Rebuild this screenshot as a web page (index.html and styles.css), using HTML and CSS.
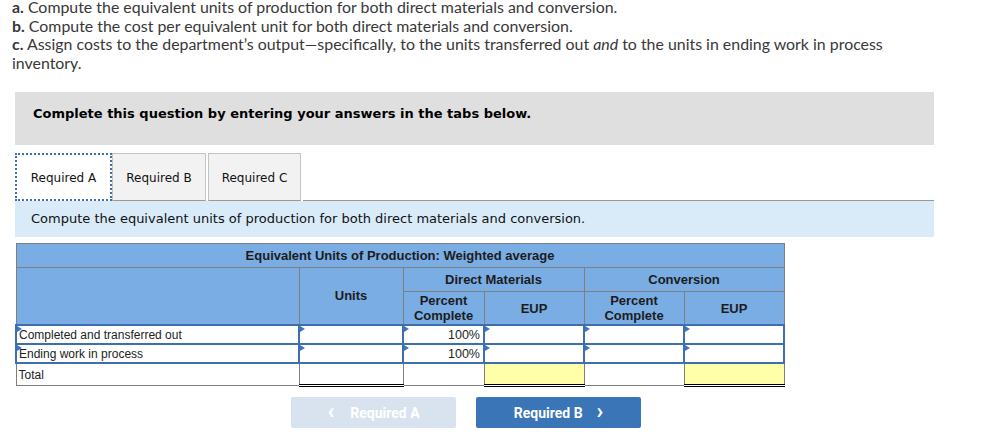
FILE: index.html
```html
<!DOCTYPE html>
<html>
<head>
<meta charset="utf-8">
<link rel="stylesheet" href="styles.css">
</head>
<body>
<div class="intro">
  <p><b>a.</b> Compute the equivalent units of production for both direct materials and conversion.</p>
  <p><b>b.</b> Compute the cost per equivalent unit for both direct materials and conversion.</p>
  <p><b>c.</b> Assign costs to the department’s output—specifically, to the units transferred out <i>and</i> to the units in ending work in process inventory.</p>
</div>
<div class="panel">
  <div class="notice">Complete this question by entering your answers in the tabs below.</div>
  <div class="tabs">
    <div class="tab active">Required A</div>
    <div class="tab">Required B</div>
    <div class="tab">Required C</div>
    <div class="tab-rest"></div>
  </div>
  <div class="instruct">Compute the equivalent units of production for both direct materials and conversion.</div>
  <table class="eup">
    <colgroup>
      <col class="c-label"><col class="c-units"><col class="c-pct"><col class="c-eup"><col class="c-pct2"><col class="c-eup2">
    </colgroup>
    <tr class="h1"><th colspan="6">Equivalent Units of Production: Weighted average</th></tr>
    <tr class="h2"><th rowspan="2"></th><th rowspan="2" class="units-h">Units</th><th colspan="2">Direct Materials</th><th colspan="2">Conversion</th></tr>
    <tr class="h3"><th>Percent<br>Complete</th><th>EUP</th><th>Percent<br>Complete</th><th>EUP</th></tr>
    <tr class="row">
      <td class="inp lab"><span class="tri"></span>Completed and transferred out</td>
      <td class="inp"><span class="tri"></span></td>
      <td class="inp num"><span class="tri"></span>100%</td>
      <td class="inp"><span class="tri"></span></td>
      <td class="inp"><span class="tri"></span></td>
      <td class="inp"><span class="tri"></span></td>
    </tr>
    <tr class="row">
      <td class="inp lab"><span class="tri"></span>Ending work in process</td>
      <td class="inp"><span class="tri"></span></td>
      <td class="inp num"><span class="tri"></span>100%</td>
      <td class="inp"><span class="tri"></span></td>
      <td class="inp"><span class="tri"></span></td>
      <td class="inp"><span class="tri"></span></td>
    </tr>
    <tr class="total">
      <td class="lab">Total</td>
      <td class="dbl"></td>
      <td></td>
      <td class="dbl yel"></td>
      <td></td>
      <td class="dbl yel"></td>
    </tr>
  </table>
  <div class="nav">
    <div class="btn prev"><span class="chev">&lsaquo;</span>Required A</div>
    <div class="btn next">Required B<span class="chev">&rsaquo;</span></div>
  </div>
</div>
</body>
</html>
```
FILE: styles.css
```css
html, body { margin: 0; padding: 0; background: #fff; }
body { width: 991px; height: 444px; overflow: hidden; }

.intro {
  margin-top: -2px;
  padding-left: 12px;
  width: 878px;
  font-family: Lato, "Liberation Sans", sans-serif;
  font-size: 15.9px;
  line-height: 18.5px;
  color: #383838;
}
.intro p { margin: 0; }
.intro b { font-weight: 700; }

.panel { margin: 20px 0 0 15px; width: 919px; }

.notice {
  background: #dfdfdf;
  height: 53px;
  box-sizing: border-box;
  padding: 13px 0 0 18px;
  font-family: "DejaVu Sans", Verdana, sans-serif;
  font-weight: bold;
  font-size: 13px;
  line-height: 18px;
  color: #000;
}

.tabs { display: flex; margin-top: 8px; height: 48px; align-items: stretch; }
.tab {
  box-sizing: border-box;
  border: 1px solid #c4c4c4;
  border-bottom: 1px solid #999;
  background: #f2f2f2;
  font-family: "DejaVu Sans", Verdana, sans-serif;
  font-size: 12px;
  color: #111;
  display: flex; align-items: center; justify-content: center;
  padding-top: 1px;
  margin-right: 2px;
}
.tab:nth-child(2) { width: 94px; margin-right: 2px; }
.tab:nth-child(3) { width: 93px; }
.tab.active {
  width: 97px;
  background: #fff;
  border: 2px dotted #3a6fb3;
  margin-right: 0;
}
.tab-rest { flex: 1; border-bottom: 1px solid #999; }

.instruct {
  background: #d9ebf9;
  height: 36px;
  box-sizing: border-box;
  padding: 10px 0 0 16px;
  font-family: "DejaVu Sans", Verdana, sans-serif;
  font-size: 13px;
  color: #111;
}

.eup {
  margin-top: 6px;
  border-collapse: collapse;
  table-layout: fixed;
  width: 769px;
  font-family: "Liberation Sans", Arial, sans-serif;
  color: #222;
  border: 1px solid #7f7f7f;
}
.c-label { width: 283px; }
.c-units { width: 104px; }
.c-pct { width: 81px; }
.c-eup { width: 100px; }
.c-pct2 { width: 100px; }
.c-eup2 { width: 100px; }

.eup th {
  background: #79ade4;
  border: 1px solid #7f7f7f;
  font-size: 13px;
  font-weight: bold;
  color: #1c1c1c;
  padding: 0;
  line-height: 15px;
}
.h1 th { height: 23px; font-size: 13px; }
.h2 th { height: 23px; }
.h2 th.units-h { vertical-align: top; padding-top: 20px; }
.h3 th { height: 32px; }

.eup td {
  position: relative;
  border: 1px solid #7f7f7f;
  padding: 0 3px;
  font-size: 12px;
  height: 17px;
  line-height: 14px;
  background: #fff;
}
.eup td.inp { border: 2px solid #3d6fae; }
.eup td.num { text-align: right; font-size: 12.5px; }
.eup td.lab { padding-left: 2px; }
.eup .total td { height: 20px; }
.eup td.dbl { border-bottom: 3px double #000; }
.eup td.yel { background: #ffffaa; }

.tri {
  position: absolute;
  left: 0; top: 0;
  width: 0; height: 0;
  border-top: 3px solid transparent;
  border-bottom: 3px solid transparent;
  border-left: 5px solid #3b74c2;
}

.nav { display: flex; margin: 10px 0 0 276px; gap: 20px; }
.btn {
  width: 165px; height: 31px;
  border-radius: 2px;
  display: flex; align-items: center; justify-content: center;
  font-family: Roboto, "Liberation Sans", sans-serif;
  font-weight: bold;
  font-size: 14px;
  color: #fff;
}
.btn.prev { background: #d9e3f0; }
.btn.next { background: #3a75b8; }
.chev { font-size: 22px; font-weight: bold; line-height: 20px; margin-top: -3px; }
.prev .chev { margin-right: 16px; }
.next .chev { margin-left: 14px; }
```
